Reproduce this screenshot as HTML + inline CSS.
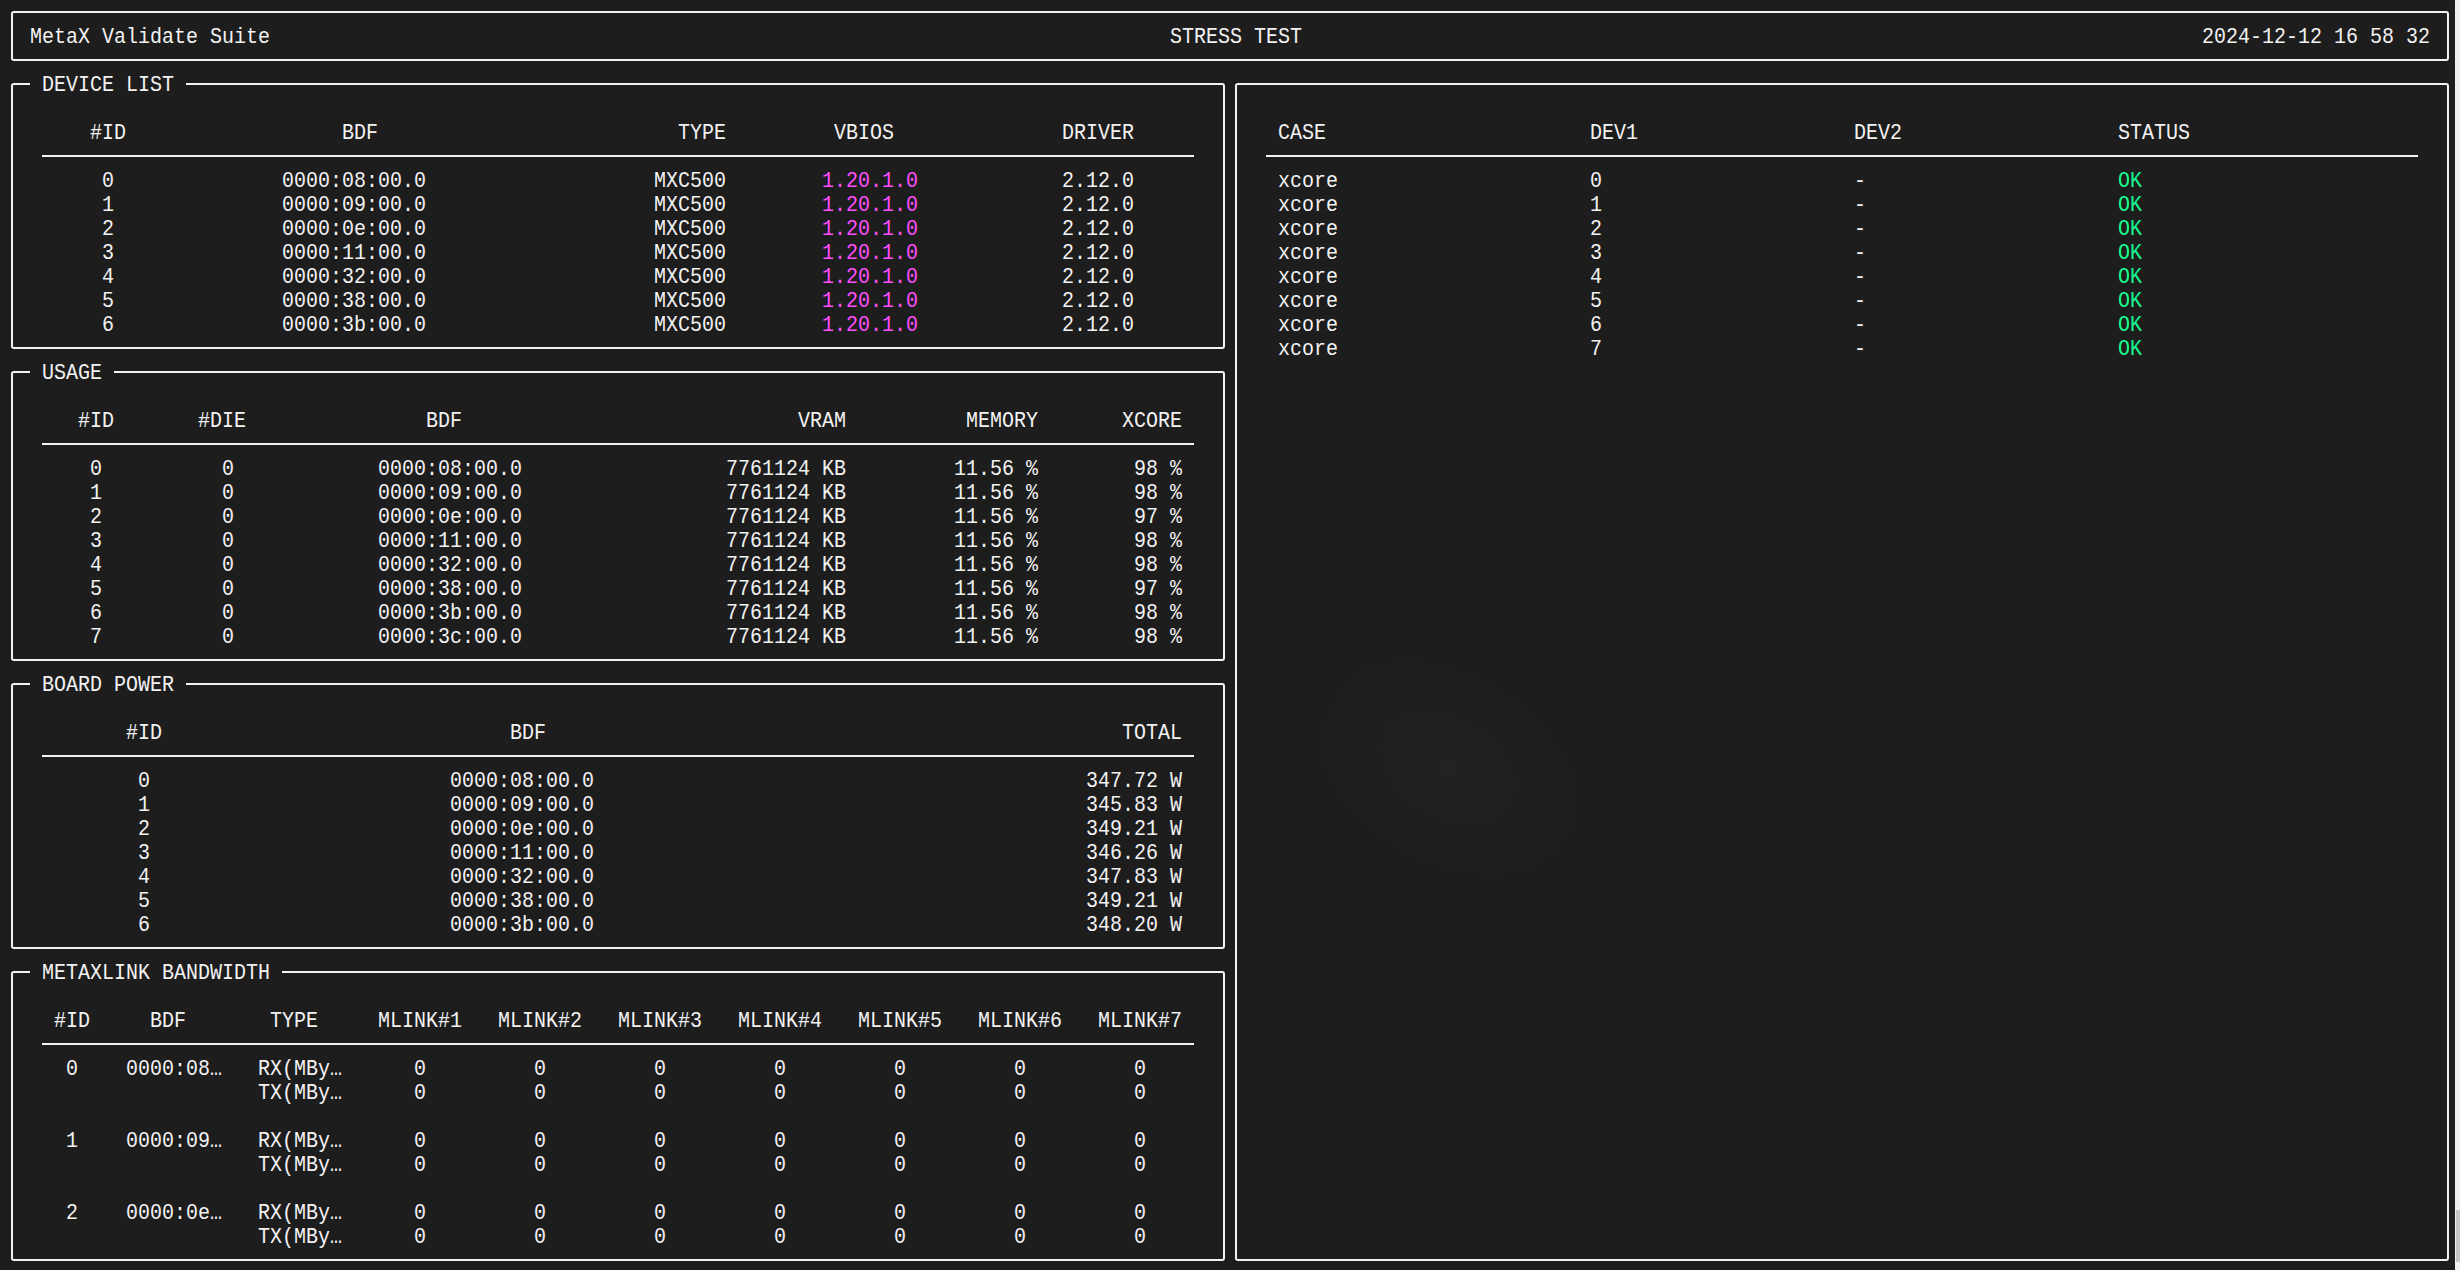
<!DOCTYPE html><html><head><meta charset="utf-8"><style>
html,body{margin:0;padding:0;width:2460px;height:1270px;overflow:hidden;background:#1d1d1d;}
.t{position:absolute;white-space:pre;font-family:"Liberation Mono",monospace;font-size:20px;line-height:24px;height:24px;color:#f2f2f2;letter-spacing:0px;transform:scaleY(1.1);transform-origin:0 4px;}
.b{position:absolute;box-sizing:border-box;border:2px solid #f2f2f2;border-radius:3px;}
.s{position:absolute;height:2px;background:#f2f2f2;}
.m{position:absolute;background:#1d1d1d;}
.sb{position:absolute;left:2455px;top:0;width:5px;height:1270px;background:#f0f0f0;}
.th{position:absolute;left:2456px;top:1210px;width:4px;height:52px;background:#c6c6c6;}
</style></head><body>
<div class="b" style="left:11px;top:11px;width:2438px;height:50px"></div>
<div class="b" style="left:11px;top:83px;width:1214px;height:266px"></div>
<div class="m" style="left:30px;top:81px;width:156px;height:6px"></div>
<div class="b" style="left:11px;top:371px;width:1214px;height:290px"></div>
<div class="m" style="left:30px;top:369px;width:84px;height:6px"></div>
<div class="b" style="left:11px;top:683px;width:1214px;height:266px"></div>
<div class="m" style="left:30px;top:681px;width:156px;height:6px"></div>
<div class="b" style="left:11px;top:971px;width:1214px;height:290px"></div>
<div class="m" style="left:30px;top:969px;width:252px;height:6px"></div>
<div class="b" style="left:1235px;top:83px;width:1214px;height:1178px"></div>
<div class="s" style="left:42px;top:155px;width:1152px"></div>
<div class="s" style="left:42px;top:443px;width:1152px"></div>
<div class="s" style="left:42px;top:755px;width:1152px"></div>
<div class="s" style="left:42px;top:1043px;width:1152px"></div>
<div class="s" style="left:1266px;top:155px;width:1152px"></div>
<div class="t" style="left:30px;top:25px">MetaX Validate Suite</div>
<div class="t" style="left:1170px;top:25px">STRESS TEST</div>
<div class="t" style="left:2202px;top:25px">2024-12-12 16 58 32</div>
<div class="t" style="left:90px;top:121px">#ID</div>
<div class="t" style="left:342px;top:121px">BDF</div>
<div class="t" style="left:678px;top:121px">TYPE</div>
<div class="t" style="left:834px;top:121px">VBIOS</div>
<div class="t" style="left:1062px;top:121px">DRIVER</div>
<div class="t" style="left:102px;top:169px">0</div>
<div class="t" style="left:282px;top:169px">0000:08:00.0</div>
<div class="t" style="left:654px;top:169px">MXC500</div>
<div class="t" style="left:822px;top:169px;color:#ff4dff">1.20.1.0</div>
<div class="t" style="left:1062px;top:169px">2.12.0</div>
<div class="t" style="left:102px;top:193px">1</div>
<div class="t" style="left:282px;top:193px">0000:09:00.0</div>
<div class="t" style="left:654px;top:193px">MXC500</div>
<div class="t" style="left:822px;top:193px;color:#ff4dff">1.20.1.0</div>
<div class="t" style="left:1062px;top:193px">2.12.0</div>
<div class="t" style="left:102px;top:217px">2</div>
<div class="t" style="left:282px;top:217px">0000:0e:00.0</div>
<div class="t" style="left:654px;top:217px">MXC500</div>
<div class="t" style="left:822px;top:217px;color:#ff4dff">1.20.1.0</div>
<div class="t" style="left:1062px;top:217px">2.12.0</div>
<div class="t" style="left:102px;top:241px">3</div>
<div class="t" style="left:282px;top:241px">0000:11:00.0</div>
<div class="t" style="left:654px;top:241px">MXC500</div>
<div class="t" style="left:822px;top:241px;color:#ff4dff">1.20.1.0</div>
<div class="t" style="left:1062px;top:241px">2.12.0</div>
<div class="t" style="left:102px;top:265px">4</div>
<div class="t" style="left:282px;top:265px">0000:32:00.0</div>
<div class="t" style="left:654px;top:265px">MXC500</div>
<div class="t" style="left:822px;top:265px;color:#ff4dff">1.20.1.0</div>
<div class="t" style="left:1062px;top:265px">2.12.0</div>
<div class="t" style="left:102px;top:289px">5</div>
<div class="t" style="left:282px;top:289px">0000:38:00.0</div>
<div class="t" style="left:654px;top:289px">MXC500</div>
<div class="t" style="left:822px;top:289px;color:#ff4dff">1.20.1.0</div>
<div class="t" style="left:1062px;top:289px">2.12.0</div>
<div class="t" style="left:102px;top:313px">6</div>
<div class="t" style="left:282px;top:313px">0000:3b:00.0</div>
<div class="t" style="left:654px;top:313px">MXC500</div>
<div class="t" style="left:822px;top:313px;color:#ff4dff">1.20.1.0</div>
<div class="t" style="left:1062px;top:313px">2.12.0</div>
<div class="t" style="left:78px;top:409px">#ID</div>
<div class="t" style="left:198px;top:409px">#DIE</div>
<div class="t" style="left:426px;top:409px">BDF</div>
<div class="t" style="left:798px;top:409px">VRAM</div>
<div class="t" style="left:966px;top:409px">MEMORY</div>
<div class="t" style="left:1122px;top:409px">XCORE</div>
<div class="t" style="left:90px;top:457px">0</div>
<div class="t" style="left:222px;top:457px">0</div>
<div class="t" style="left:378px;top:457px">0000:08:00.0</div>
<div class="t" style="left:726px;top:457px">7761124 KB</div>
<div class="t" style="left:954px;top:457px">11.56 %</div>
<div class="t" style="left:1134px;top:457px">98 %</div>
<div class="t" style="left:90px;top:481px">1</div>
<div class="t" style="left:222px;top:481px">0</div>
<div class="t" style="left:378px;top:481px">0000:09:00.0</div>
<div class="t" style="left:726px;top:481px">7761124 KB</div>
<div class="t" style="left:954px;top:481px">11.56 %</div>
<div class="t" style="left:1134px;top:481px">98 %</div>
<div class="t" style="left:90px;top:505px">2</div>
<div class="t" style="left:222px;top:505px">0</div>
<div class="t" style="left:378px;top:505px">0000:0e:00.0</div>
<div class="t" style="left:726px;top:505px">7761124 KB</div>
<div class="t" style="left:954px;top:505px">11.56 %</div>
<div class="t" style="left:1134px;top:505px">97 %</div>
<div class="t" style="left:90px;top:529px">3</div>
<div class="t" style="left:222px;top:529px">0</div>
<div class="t" style="left:378px;top:529px">0000:11:00.0</div>
<div class="t" style="left:726px;top:529px">7761124 KB</div>
<div class="t" style="left:954px;top:529px">11.56 %</div>
<div class="t" style="left:1134px;top:529px">98 %</div>
<div class="t" style="left:90px;top:553px">4</div>
<div class="t" style="left:222px;top:553px">0</div>
<div class="t" style="left:378px;top:553px">0000:32:00.0</div>
<div class="t" style="left:726px;top:553px">7761124 KB</div>
<div class="t" style="left:954px;top:553px">11.56 %</div>
<div class="t" style="left:1134px;top:553px">98 %</div>
<div class="t" style="left:90px;top:577px">5</div>
<div class="t" style="left:222px;top:577px">0</div>
<div class="t" style="left:378px;top:577px">0000:38:00.0</div>
<div class="t" style="left:726px;top:577px">7761124 KB</div>
<div class="t" style="left:954px;top:577px">11.56 %</div>
<div class="t" style="left:1134px;top:577px">97 %</div>
<div class="t" style="left:90px;top:601px">6</div>
<div class="t" style="left:222px;top:601px">0</div>
<div class="t" style="left:378px;top:601px">0000:3b:00.0</div>
<div class="t" style="left:726px;top:601px">7761124 KB</div>
<div class="t" style="left:954px;top:601px">11.56 %</div>
<div class="t" style="left:1134px;top:601px">98 %</div>
<div class="t" style="left:90px;top:625px">7</div>
<div class="t" style="left:222px;top:625px">0</div>
<div class="t" style="left:378px;top:625px">0000:3c:00.0</div>
<div class="t" style="left:726px;top:625px">7761124 KB</div>
<div class="t" style="left:954px;top:625px">11.56 %</div>
<div class="t" style="left:1134px;top:625px">98 %</div>
<div class="t" style="left:126px;top:721px">#ID</div>
<div class="t" style="left:510px;top:721px">BDF</div>
<div class="t" style="left:1122px;top:721px">TOTAL</div>
<div class="t" style="left:138px;top:769px">0</div>
<div class="t" style="left:450px;top:769px">0000:08:00.0</div>
<div class="t" style="left:1086px;top:769px">347.72 W</div>
<div class="t" style="left:138px;top:793px">1</div>
<div class="t" style="left:450px;top:793px">0000:09:00.0</div>
<div class="t" style="left:1086px;top:793px">345.83 W</div>
<div class="t" style="left:138px;top:817px">2</div>
<div class="t" style="left:450px;top:817px">0000:0e:00.0</div>
<div class="t" style="left:1086px;top:817px">349.21 W</div>
<div class="t" style="left:138px;top:841px">3</div>
<div class="t" style="left:450px;top:841px">0000:11:00.0</div>
<div class="t" style="left:1086px;top:841px">346.26 W</div>
<div class="t" style="left:138px;top:865px">4</div>
<div class="t" style="left:450px;top:865px">0000:32:00.0</div>
<div class="t" style="left:1086px;top:865px">347.83 W</div>
<div class="t" style="left:138px;top:889px">5</div>
<div class="t" style="left:450px;top:889px">0000:38:00.0</div>
<div class="t" style="left:1086px;top:889px">349.21 W</div>
<div class="t" style="left:138px;top:913px">6</div>
<div class="t" style="left:450px;top:913px">0000:3b:00.0</div>
<div class="t" style="left:1086px;top:913px">348.20 W</div>
<div class="t" style="left:54px;top:1009px">#ID</div>
<div class="t" style="left:150px;top:1009px">BDF</div>
<div class="t" style="left:270px;top:1009px">TYPE</div>
<div class="t" style="left:378px;top:1009px">MLINK#1</div>
<div class="t" style="left:498px;top:1009px">MLINK#2</div>
<div class="t" style="left:618px;top:1009px">MLINK#3</div>
<div class="t" style="left:738px;top:1009px">MLINK#4</div>
<div class="t" style="left:858px;top:1009px">MLINK#5</div>
<div class="t" style="left:978px;top:1009px">MLINK#6</div>
<div class="t" style="left:1098px;top:1009px">MLINK#7</div>
<div class="t" style="left:66px;top:1057px">0</div>
<div class="t" style="left:126px;top:1057px">0000:08…</div>
<div class="t" style="left:258px;top:1057px">RX(MBy…</div>
<div class="t" style="left:258px;top:1081px">TX(MBy…</div>
<div class="t" style="left:414px;top:1057px">0</div>
<div class="t" style="left:414px;top:1081px">0</div>
<div class="t" style="left:534px;top:1057px">0</div>
<div class="t" style="left:534px;top:1081px">0</div>
<div class="t" style="left:654px;top:1057px">0</div>
<div class="t" style="left:654px;top:1081px">0</div>
<div class="t" style="left:774px;top:1057px">0</div>
<div class="t" style="left:774px;top:1081px">0</div>
<div class="t" style="left:894px;top:1057px">0</div>
<div class="t" style="left:894px;top:1081px">0</div>
<div class="t" style="left:1014px;top:1057px">0</div>
<div class="t" style="left:1014px;top:1081px">0</div>
<div class="t" style="left:1134px;top:1057px">0</div>
<div class="t" style="left:1134px;top:1081px">0</div>
<div class="t" style="left:66px;top:1129px">1</div>
<div class="t" style="left:126px;top:1129px">0000:09…</div>
<div class="t" style="left:258px;top:1129px">RX(MBy…</div>
<div class="t" style="left:258px;top:1153px">TX(MBy…</div>
<div class="t" style="left:414px;top:1129px">0</div>
<div class="t" style="left:414px;top:1153px">0</div>
<div class="t" style="left:534px;top:1129px">0</div>
<div class="t" style="left:534px;top:1153px">0</div>
<div class="t" style="left:654px;top:1129px">0</div>
<div class="t" style="left:654px;top:1153px">0</div>
<div class="t" style="left:774px;top:1129px">0</div>
<div class="t" style="left:774px;top:1153px">0</div>
<div class="t" style="left:894px;top:1129px">0</div>
<div class="t" style="left:894px;top:1153px">0</div>
<div class="t" style="left:1014px;top:1129px">0</div>
<div class="t" style="left:1014px;top:1153px">0</div>
<div class="t" style="left:1134px;top:1129px">0</div>
<div class="t" style="left:1134px;top:1153px">0</div>
<div class="t" style="left:66px;top:1201px">2</div>
<div class="t" style="left:126px;top:1201px">0000:0e…</div>
<div class="t" style="left:258px;top:1201px">RX(MBy…</div>
<div class="t" style="left:258px;top:1225px">TX(MBy…</div>
<div class="t" style="left:414px;top:1201px">0</div>
<div class="t" style="left:414px;top:1225px">0</div>
<div class="t" style="left:534px;top:1201px">0</div>
<div class="t" style="left:534px;top:1225px">0</div>
<div class="t" style="left:654px;top:1201px">0</div>
<div class="t" style="left:654px;top:1225px">0</div>
<div class="t" style="left:774px;top:1201px">0</div>
<div class="t" style="left:774px;top:1225px">0</div>
<div class="t" style="left:894px;top:1201px">0</div>
<div class="t" style="left:894px;top:1225px">0</div>
<div class="t" style="left:1014px;top:1201px">0</div>
<div class="t" style="left:1014px;top:1225px">0</div>
<div class="t" style="left:1134px;top:1201px">0</div>
<div class="t" style="left:1134px;top:1225px">0</div>
<div class="t" style="left:1278px;top:121px">CASE</div>
<div class="t" style="left:1590px;top:121px">DEV1</div>
<div class="t" style="left:1854px;top:121px">DEV2</div>
<div class="t" style="left:2118px;top:121px">STATUS</div>
<div class="t" style="left:1278px;top:169px">xcore</div>
<div class="t" style="left:1590px;top:169px">0</div>
<div class="t" style="left:1854px;top:169px">-</div>
<div class="t" style="left:2118px;top:169px;color:#18f88c">OK</div>
<div class="t" style="left:1278px;top:193px">xcore</div>
<div class="t" style="left:1590px;top:193px">1</div>
<div class="t" style="left:1854px;top:193px">-</div>
<div class="t" style="left:2118px;top:193px;color:#18f88c">OK</div>
<div class="t" style="left:1278px;top:217px">xcore</div>
<div class="t" style="left:1590px;top:217px">2</div>
<div class="t" style="left:1854px;top:217px">-</div>
<div class="t" style="left:2118px;top:217px;color:#18f88c">OK</div>
<div class="t" style="left:1278px;top:241px">xcore</div>
<div class="t" style="left:1590px;top:241px">3</div>
<div class="t" style="left:1854px;top:241px">-</div>
<div class="t" style="left:2118px;top:241px;color:#18f88c">OK</div>
<div class="t" style="left:1278px;top:265px">xcore</div>
<div class="t" style="left:1590px;top:265px">4</div>
<div class="t" style="left:1854px;top:265px">-</div>
<div class="t" style="left:2118px;top:265px;color:#18f88c">OK</div>
<div class="t" style="left:1278px;top:289px">xcore</div>
<div class="t" style="left:1590px;top:289px">5</div>
<div class="t" style="left:1854px;top:289px">-</div>
<div class="t" style="left:2118px;top:289px;color:#18f88c">OK</div>
<div class="t" style="left:1278px;top:313px">xcore</div>
<div class="t" style="left:1590px;top:313px">6</div>
<div class="t" style="left:1854px;top:313px">-</div>
<div class="t" style="left:2118px;top:313px;color:#18f88c">OK</div>
<div class="t" style="left:1278px;top:337px">xcore</div>
<div class="t" style="left:1590px;top:337px">7</div>
<div class="t" style="left:1854px;top:337px">-</div>
<div class="t" style="left:2118px;top:337px;color:#18f88c">OK</div>
<div class="t" style="left:42px;top:73px">DEVICE LIST</div>
<div class="t" style="left:42px;top:361px">USAGE</div>
<div class="t" style="left:42px;top:673px">BOARD POWER</div>
<div class="t" style="left:42px;top:961px">METAXLINK BANDWIDTH</div>
<div style="position:absolute;left:1315px;top:675px;width:290px;height:200px;background:radial-gradient(ellipse 50% 50% at 45% 50%,rgba(32,35,33,1) 0%,rgba(31,33,32,0.6) 55%,rgba(29,29,29,0) 100%);transform:rotate(30deg)"></div>
<div class="sb"></div><div class="th"></div>
</body></html>
